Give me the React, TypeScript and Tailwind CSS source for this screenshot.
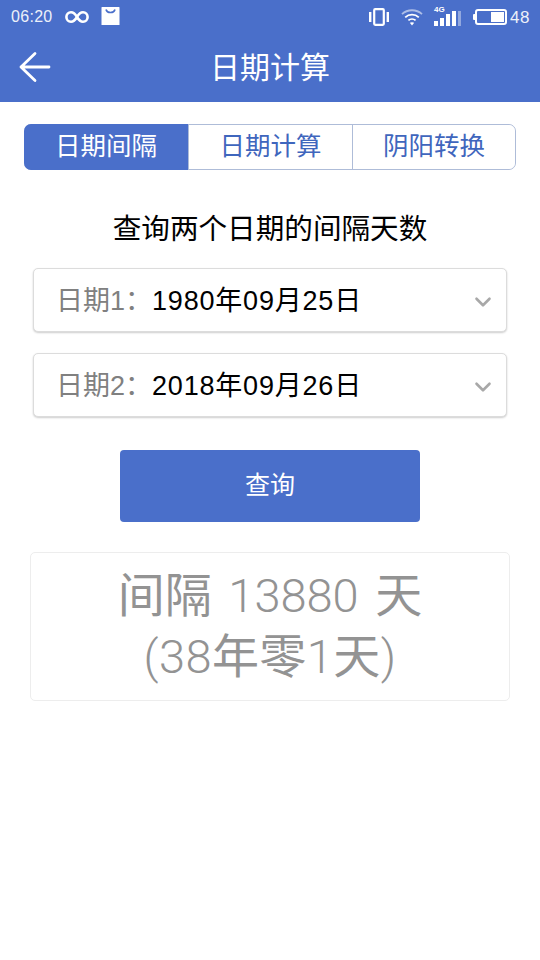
import React from 'react';
import { ChevronDown } from 'lucide-react';

const font = { fontFamily: '"Liberation Sans", "Noto Sans CJK SC", sans-serif' };
const thinDigits = { fontFamily: 'Roboto, "Noto Sans CJK SC", sans-serif' };

function StatusBar() {
  return (
    <div className="flex h-[34px] items-center justify-between pl-[11px] pr-[10px] text-white">
      <div className="flex items-center">
        <span className="text-[16px] leading-none tracking-[0.3px] opacity-90">06:20</span>
        {/* infinity loop */}
        <svg className="ml-[11px]" width="26" height="16" viewBox="0 0 26 16" fill="none">
          <path
            d="M13 8C11 4.5 9.5 3.2 7 3.2 4.4 3.2 2.4 5.2 2.4 8S4.4 12.8 7 12.8C9.5 12.8 11 11.5 13 8ZM13 8C15 4.5 16.5 3.2 19 3.2 21.6 3.2 23.6 5.2 23.6 8S21.6 12.8 19 12.8C16.5 12.8 15 11.5 13 8Z"
            stroke="white"
            strokeWidth="2.6"
          />
        </svg>
        {/* shopping bag notification */}
        <svg className="ml-[11px] mb-[1px]" width="19" height="19" viewBox="0 0 19 19">
          <path d="M1 0h17a0.5 0.5 0 0 1 .5.5V18H.5V.5A.5.5 0 0 1 1 0Z" fill="white" />
          <path d="M5 2.5C6 6.5 13 6.5 14 2.5" fill="none" stroke="#4a6fca" strokeWidth="1.6" />
        </svg>
      </div>
      <div className="flex items-center">
        {/* vibrate */}
        <svg width="20" height="18" viewBox="0 0 20 18" fill="none">
          <rect x="5.2" y="1.2" width="9.6" height="15.6" rx="1" stroke="white" strokeWidth="2.2" />
          <rect x="0" y="4" width="2.4" height="10" fill="white" />
          <rect x="17.6" y="4" width="2.4" height="10" fill="white" />
        </svg>
        {/* wifi */}
        <svg className="ml-[12px]" width="22" height="18" viewBox="0 0 22 18" fill="none">
          <path d="M1 6.2C6.6 .9 15.4 .9 21 6.2" stroke="white" strokeOpacity="0.55" strokeWidth="1.8" />
          <path d="M4.2 9.4C8 5.8 14 5.8 17.8 9.4" stroke="white" strokeWidth="1.8" />
          <path d="M7.4 12.4C9.4 10.6 12.6 10.6 14.6 12.4" stroke="white" strokeWidth="1.8" />
          <path d="M11 17.5 8.8 14.8C10 13.9 12 13.9 13.2 14.8Z" fill="white" />
        </svg>
        {/* 4G signal */}
        <div className="relative ml-[11px] flex h-[18px] w-[27px] items-end gap-[2px]">
          <span className="absolute left-0 top-[-2px] text-[8px] font-bold leading-none">4G</span>
          <div className="h-[5px] w-[4px] bg-white" />
          <div className="h-[8px] w-[4px] bg-white" />
          <div className="h-[12px] w-[4px] bg-white" />
          <div className="h-[15px] w-[4px] bg-white" />
          <div className="h-[15px] w-[3px] bg-white opacity-40" />
        </div>
        {/* battery */}
        <div className="ml-[12px] flex items-center">
          <div className="h-[6px] w-[2px] rounded-l-[1px] bg-white" />
          <div className="flex h-[16px] w-[32px] justify-end rounded-[3px] border-2 border-white p-[1px]">
            <div className="w-[13px] bg-white" />
          </div>
        </div>
        <span className="ml-[3px] text-[17px] leading-none tracking-[0.5px] opacity-90">48</span>
      </div>
    </div>
  );
}

function DateSelect({ label, value }: { label: string; value: string }) {
  return (
    <div className="flex h-[64px] items-center justify-between rounded-[5px] border border-[#dcdcdc] bg-white pl-[22px] pr-[10px] shadow-[0_1px_2px_rgba(0,0,0,0.2)]">
      <div className="flex items-center pt-[3px] text-[27px] leading-none">
        <span className="text-[#808080]">{label}</span>
        <span className="tracking-[0.8px] text-black">{value}</span>
      </div>
      <ChevronDown size={26} strokeWidth={2.4} className="mt-[5px] text-[#a8a8a8]" />
    </div>
  );
}

export default function App() {
  const tabs = ['日期间隔', '日期计算', '阴阳转换'];

  return (
    <div className="h-[960px] w-[540px] bg-white" style={font}>
      <div className="h-[102px] bg-[#4a6fca]">
        <StatusBar />
        <div className="relative flex h-[68px] items-center justify-center text-white">
          <svg className="absolute left-[18px] top-[17px]" width="34" height="32" viewBox="0 0 34 32" fill="none">
            <path d="M17 2.5 3 16 17 29.5M3 16H31" stroke="white" strokeWidth="2.8" strokeLinecap="round" strokeLinejoin="round" />
          </svg>
          <span className="text-[30px] leading-none">日期计算</span>
        </div>
      </div>

      <div className="mx-[24px] mt-[22px] flex h-[46px] rounded-[7px] border border-[#aebcd8]">
        {tabs.map((tab, i) => (
          <div
            key={tab}
            className={`flex items-center justify-center text-[25.5px] leading-none ${
              i === 0
                ? 'm-[-1px] mr-0 w-[164px] flex-none rounded-l-[7px] bg-[#4a6fca] text-white'
                : 'border-l border-[#aebcd8] bg-white text-[#3f66bd]'
            } ${i === 1 ? 'w-[164px] flex-none' : ''} ${i === 2 ? 'flex-1 rounded-r-[7px]' : ''}`}
          >
            {tab}
          </div>
        ))}
      </div>

      <div className="mt-[45px] text-center text-[28.6px] leading-none text-black">查询两个日期的间隔天数</div>

      <div className="mx-[33px] mt-[24px] flex flex-col gap-[21px]">
        <DateSelect label="日期1：" value="1980年09月25日" />
        <DateSelect label="日期2：" value="2018年09月26日" />
      </div>

      <div className="mx-auto mt-[33px] flex h-[72px] w-[300px] items-center justify-center rounded-[4px] bg-[#4a6fca] text-[25px] leading-none text-white">
        查询
      </div>

      <div className="mx-[30px] mt-[30px] flex h-[149px] flex-col items-center justify-center gap-[14px] rounded-[5px] border border-[#ededed] text-[47px] leading-none text-[#939393]" style={thinDigits}>
        <div className="[word-spacing:5px]">
          间隔 <span className="font-light">13880</span> 天
        </div>
        <div className="tracking-[0.4px]">
          <span className="font-light">(38</span>年零<span className="font-light">1</span>天<span className="font-light">)</span>
        </div>
      </div>
    </div>
  );
}
